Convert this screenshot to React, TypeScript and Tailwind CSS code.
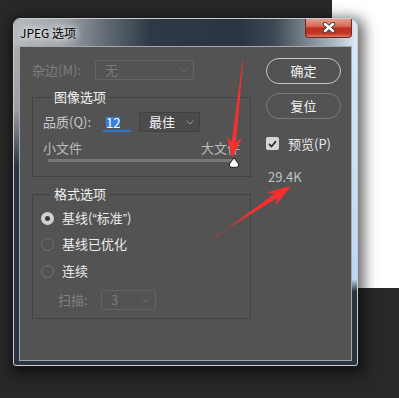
import React from "react";

const Chevron = ({ color }: { color: string }) => (
  <svg width="8" height="5" viewBox="0 0 8 5">
    <path d="M0.5 0.5 L4 4 L7.5 0.5" fill="none" stroke={color} strokeWidth="1" />
  </svg>
);

const Radio = ({ checked }: { checked?: boolean }) =>
  checked ? (
    <span className="flex h-[13px] w-[13px] items-center justify-center rounded-full bg-[#d2d2d2]">
      <span className="h-[5px] w-[5px] rounded-full bg-[#3a3a3a]" />
    </span>
  ) : (
    <span className="h-[13px] w-[13px] rounded-full border border-[#727272]" />
  );

const CloseButton = () => (
  <div className="-mt-[1px] mr-[5px] flex h-[20px] w-[47px] items-center justify-center rounded-b-[4px] border border-t-0 border-[#6e2a20] bg-[linear-gradient(to_bottom,#e8a497_0%,#d56c5a_42%,#bd2f1b_55%,#c23a25_82%,#de7865_100%)]">
    <svg width="14" height="11" viewBox="0 0 14 11">
      <path d="M3 2 L11 9 M11 2 L3 9" stroke="#3b3b3b" strokeWidth="4.2" strokeLinecap="round" />
      <path d="M3 2 L11 9 M11 2 L3 9" stroke="#ffffff" strokeWidth="2.4" strokeLinecap="round" />
    </svg>
  </div>
);

const Arrows = () => (
  <svg className="pointer-events-none absolute inset-0 z-20" width="399" height="398" viewBox="0 0 399 398">
    <polygon
      points="243.3,60 236,142.4 241.9,138 232,158 226.9,136.2 231.6,141.9 242.7,60"
      fill="#f5302e"
    />
    <polygon
      points="214.8,236.2 277.4,198.1 275.4,206 291,186 266.6,192.6 274.6,193.8 215.3,236.9"
      fill="#f5302e"
    />
  </svg>
);

const Content = () => (
  <div className="flex h-full pl-[12px] pt-[11px] text-[13px] leading-[18px]">
    {/* left column */}
    <div className="mt-[2px] w-[219px]">
      <div className="flex h-[20px] items-center">
        <span className="w-[63px] text-[#7f7f7f]">杂边(M):</span>
        <div className="flex h-[20px] w-[99px] items-center justify-between rounded-[2px] border border-[#636363] pl-[9px] pr-[5px]">
          <span className="text-[#7a7a7a]">无</span>
          <Chevron color="#6c6c6c" />
        </div>
      </div>

      <fieldset className="mt-[8px] border border-[#424242]">
        <legend className="ml-[18px] px-[3px] text-[#f2f2f2]">图像选项</legend>
        <div className="px-[10px] pb-[14px] pt-[6px]">
          <div className="flex h-[20px] items-center">
            <span className="w-[60px] text-[#cacaca]">品质(Q):</span>
            <div className="flex h-[20px] w-[28px] items-start border-b-[2px] border-[#2a78d6] pl-[3px] pt-[5px]">
              <span className="h-[11px] bg-[#3a7edc] leading-[11px] text-white">12</span>
            </div>
            <div className="ml-[8px] flex h-[20px] w-[61px] items-center justify-between border border-[#414141] bg-[#4b4b4b] pl-[9px] pr-[5px]">
              <span className="text-[#f2f2f2]">最佳</span>
              <Chevron color="#9a9a9a" />
            </div>
          </div>
          <div className="mt-[8px] flex h-[16px] items-center justify-between leading-[16px] text-[#bdbdbd]">
            <span>小文件</span>
            <span>大文件</span>
          </div>
          <div className="relative ml-[5px] mt-[3px] h-[3px] w-[188px] bg-[#767676]">
            <svg className="absolute left-[180px] top-[-2px]" width="12" height="11" viewBox="0 0 12 11">
              <path
                d="M6 0.8 L10.6 7 Q11.4 10.3 8.2 10.3 L3.8 10.3 Q0.6 10.3 1.4 7 Z"
                fill="#ffffff"
                stroke="#1e1e1e"
                strokeWidth="1"
              />
            </svg>
          </div>
        </div>
      </fieldset>

      <fieldset className="mt-[8px] border border-[#424242]">
        <legend className="ml-[18px] px-[3px] text-[#f2f2f2]">格式选项</legend>
        <div className="pb-[8px] pl-[8px] pt-[7px]">
          <div className="flex h-[16px] items-center gap-[8px] text-[#ececec]">
            <Radio checked />
            <span>
              基线(<span className="[font-family:'Liberation_Sans',sans-serif]">“</span>标准
              <span className="[font-family:'Liberation_Sans',sans-serif]">”</span>)
            </span>
          </div>
          <div className="mt-[10px] flex h-[16px] items-center gap-[8px] text-[#ececec]">
            <Radio />
            <span>基线已优化</span>
          </div>
          <div className="mt-[11px] flex h-[16px] items-center gap-[8px] text-[#ececec]">
            <Radio />
            <span>连续</span>
          </div>
          <div className="mt-[11px] flex h-[20px] items-center pl-[17px]">
            <span className="w-[43px] text-[#7f7f7f]">扫描:</span>
            <div className="flex h-[20px] w-[55px] items-center justify-between rounded-[2px] border border-[#636363] pl-[9px] pr-[5px]">
              <span className="text-[#7a7a7a]">3</span>
              <Chevron color="#6c6c6c" />
            </div>
          </div>
        </div>
      </fieldset>
    </div>

    {/* right column */}
    <div className="ml-[15px] flex w-[75px] flex-col">
      <button className="flex h-[26px] items-center justify-center rounded-full border border-[#c6c6c6] text-[#f5f5f5]">
        确定
      </button>
      <button className="mt-[9px] flex h-[26px] items-center justify-center rounded-full border border-[#7a7a7a] text-[#f5f5f5]">
        复位
      </button>
      <div className="mt-[18px] flex h-[13px] items-center">
        <span className="flex h-[13px] w-[13px] items-center justify-center rounded-[2px] bg-[#d6d6d6]">
          <svg width="9" height="8" viewBox="0 0 9 8">
            <path d="M1 4 L3.5 6.5 L8 1.2" fill="none" stroke="#333333" strokeWidth="1.8" />
          </svg>
        </span>
        <span className="ml-[9px] text-[#e8e8e8]">预览(P)</span>
      </div>
      <span className="ml-[2px] mt-[19px] leading-[16px] text-[#b9c3cc]">29.4K</span>
    </div>
  </div>
);

export default function App() {
  return (
    <div className="relative h-[398px] w-[399px] overflow-hidden bg-[#282828] pl-[13px] pt-[18px] [font-family:'Noto_Sans_CJK_SC','Noto_Sans',sans-serif]">
      <div className="absolute right-0 top-0 h-[288px] w-[67px] bg-white" />

      <div className="relative z-10 flex h-[348px] w-[345px] flex-col overflow-hidden rounded-b-[3px] rounded-t-[7px] border border-[#c9cdd1] bg-[#2b3440] shadow-[2px_4px_14px_4px_rgba(0,0,0,0.6)]">
        <div className="flex h-[27px] items-start justify-between bg-[linear-gradient(to_right,#b4b9be_0%,#a2a8ae_13%,#5c6670_28%,#2e3945_40%,#2b3541_66%,#3f4955_76%,#6d7780_83%,#a9b6c3_93%,#dcebf8_100%)]">
          <span className="mt-[5px] pl-[6px] text-[12px] leading-[18px] text-black [text-shadow:0_0_6px_#ffffff,0_0_10px_#ffffff]">
            JPEG 选项
          </span>
          <CloseButton />
        </div>
        <div className="flex flex-1">
          <div className="w-[5px] bg-[linear-gradient(to_bottom,#a9aeb3_0%,#9aa0a6_20%,#2c3541_38%)]" />
          <div className="flex-1 border border-[#a4a9ae] bg-[#535353]">
            <Content />
          </div>
          <div className="w-[5px] bg-[linear-gradient(to_bottom,#d6e8f8_0%,#bcd8f4_74%,#2b3440_78%)]" />
        </div>
        <div className="h-[4px]" />
      </div>

      <Arrows />
    </div>
  );
}
